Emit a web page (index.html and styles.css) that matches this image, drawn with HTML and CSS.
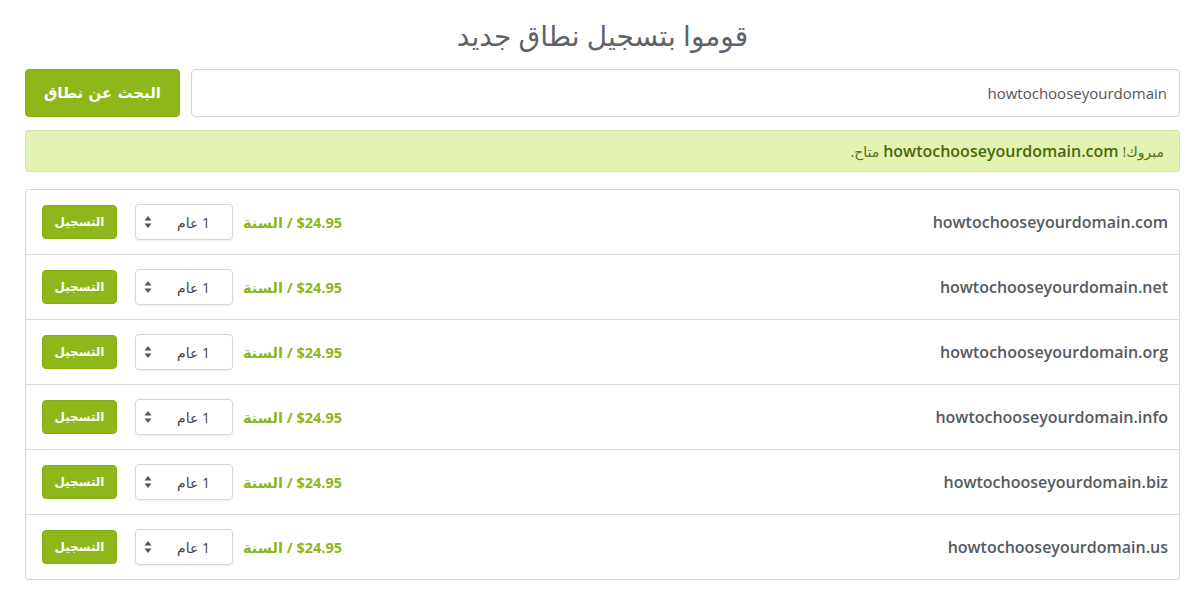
FILE: index.html
```html
<!DOCTYPE html>
<html lang="ar" dir="rtl">
<head>
  <meta charset="UTF-8">
  <title>تسجيل نطاق جديد</title>
  <link rel="stylesheet" href="styles.css">
</head>
<body>
  <div class="page">
    <h1 class="title">قوموا بتسجيل نطاق جديد</h1>

    <form class="search">
      <input class="search-input" type="text" value="howtochooseyourdomain" dir="ltr">
      <button class="search-btn" type="button">البحث عن نطاق</button>
    </form>

    <div class="alert">مبروك! <strong>howtochooseyourdomain.com</strong> متاح.</div>

    <div class="results">
      <div class="row">
        <span class="domain">howtochooseyourdomain.com</span>
        <div class="actions">
          <span class="price">$24.95 / السنة</span>
          <div class="years"><span>1 عام</span><svg class="arrows" width="8" height="14" viewBox="0 0 8 14"><path d="M4 1 L7.5 5.5 H0.5 Z M4 13 L7.5 8.5 H0.5 Z" fill="#555"/></svg></div>
          <button class="reg-btn" type="button">التسجيل</button>
        </div>
      </div>
      <div class="row">
        <span class="domain">howtochooseyourdomain.net</span>
        <div class="actions">
          <span class="price">$24.95 / السنة</span>
          <div class="years"><span>1 عام</span><svg class="arrows" width="8" height="14" viewBox="0 0 8 14"><path d="M4 1 L7.5 5.5 H0.5 Z M4 13 L7.5 8.5 H0.5 Z" fill="#555"/></svg></div>
          <button class="reg-btn" type="button">التسجيل</button>
        </div>
      </div>
      <div class="row">
        <span class="domain">howtochooseyourdomain.org</span>
        <div class="actions">
          <span class="price">$24.95 / السنة</span>
          <div class="years"><span>1 عام</span><svg class="arrows" width="8" height="14" viewBox="0 0 8 14"><path d="M4 1 L7.5 5.5 H0.5 Z M4 13 L7.5 8.5 H0.5 Z" fill="#555"/></svg></div>
          <button class="reg-btn" type="button">التسجيل</button>
        </div>
      </div>
      <div class="row">
        <span class="domain">howtochooseyourdomain.info</span>
        <div class="actions">
          <span class="price">$24.95 / السنة</span>
          <div class="years"><span>1 عام</span><svg class="arrows" width="8" height="14" viewBox="0 0 8 14"><path d="M4 1 L7.5 5.5 H0.5 Z M4 13 L7.5 8.5 H0.5 Z" fill="#555"/></svg></div>
          <button class="reg-btn" type="button">التسجيل</button>
        </div>
      </div>
      <div class="row">
        <span class="domain">howtochooseyourdomain.biz</span>
        <div class="actions">
          <span class="price">$24.95 / السنة</span>
          <div class="years"><span>1 عام</span><svg class="arrows" width="8" height="14" viewBox="0 0 8 14"><path d="M4 1 L7.5 5.5 H0.5 Z M4 13 L7.5 8.5 H0.5 Z" fill="#555"/></svg></div>
          <button class="reg-btn" type="button">التسجيل</button>
        </div>
      </div>
      <div class="row">
        <span class="domain">howtochooseyourdomain.us</span>
        <div class="actions">
          <span class="price">$24.95 / السنة</span>
          <div class="years"><span>1 عام</span><svg class="arrows" width="8" height="14" viewBox="0 0 8 14"><path d="M4 1 L7.5 5.5 H0.5 Z M4 13 L7.5 8.5 H0.5 Z" fill="#555"/></svg></div>
          <button class="reg-btn" type="button">التسجيل</button>
        </div>
      </div>
    </div>
  </div>
</body>
</html>
```

FILE: styles.css
```css
body {
  margin: 0;
  font-family: "Open Sans", "DejaVu Sans", sans-serif;
  color: #555;
  background: #fff;
}

.page {
  padding: 0 20px 0 25px;
}

.title {
  margin: 0;
  padding: 14px 0 13px;
  font-size: 28px;
  font-weight: normal;
  line-height: 42px;
  text-align: center;
  color: #5f6368;
}

.search {
  display: flex;
  gap: 11px;
  margin: 0;
}

.search-input {
  flex: 1;
  height: 48px;
  box-sizing: border-box;
  border: 1px solid #d6d6d6;
  border-radius: 4px;
  padding: 0 12px;
  font-family: "Open Sans", sans-serif;
  font-size: 15px;
  color: #555;
  text-align: right;
  box-shadow: inset 0 1px 2px rgba(0, 0, 0, 0.05);
}

.search-btn {
  width: 155px;
  height: 48px;
  border: 1px solid #85ab12;
  border-radius: 4px;
  background-color: #8fb71b;
  color: #fff;
  font-family: "DejaVu Sans", sans-serif;
  font-size: 15px;
  font-weight: bold;
  cursor: pointer;
}

.alert {
  margin-top: 13px;
  height: 42px;
  box-sizing: border-box;
  padding: 0 15px;
  display: flex;
  align-items: center;
  background-color: #e3f3b4;
  border: 1px solid #d2e8a0;
  border-radius: 3px;
  font-size: 14px;
  color: #54701a;
}

.alert strong {
  color: #4a6a05;
  font-size: 16px;
  font-weight: 600;
  margin: 0 4px;
}

.results {
  margin-top: 17px;
  border: 1px solid #d8d8d8;
  border-radius: 3px;
}

.row {
  display: flex;
  justify-content: space-between;
  align-items: center;
  height: 64px;
  padding: 0 11px 0 16px;
  border-bottom: 1px solid #dcdcdc;
}

.row:last-child {
  border-bottom: none;
}

.domain {
  font-size: 16px;
  font-weight: 600;
  color: #555a60;
}

.actions {
  display: flex;
  align-items: center;
}

.price {
  font-size: 14.5px;
  font-weight: bold;
  color: #8db61d;
}

.years {
  display: flex;
  align-items: center;
  justify-content: space-between;
  width: 98px;
  height: 36px;
  box-sizing: border-box;
  margin: 0 10px 0 18px;
  padding: 0 22px 0 8px;
  border: 1px solid #d6d6d6;
  border-radius: 4px;
  box-shadow: 0 1px 2px rgba(0, 0, 0, 0.08);
  font-size: 14px;
  color: #444;
}

.reg-btn {
  width: 75px;
  height: 34px;
  border: 1px solid #86ad14;
  border-radius: 4px;
  background-color: #8fb71b;
  color: #fff;
  font-family: "DejaVu Sans", sans-serif;
  font-size: 12px;
  font-weight: bold;
  cursor: pointer;
}
```
